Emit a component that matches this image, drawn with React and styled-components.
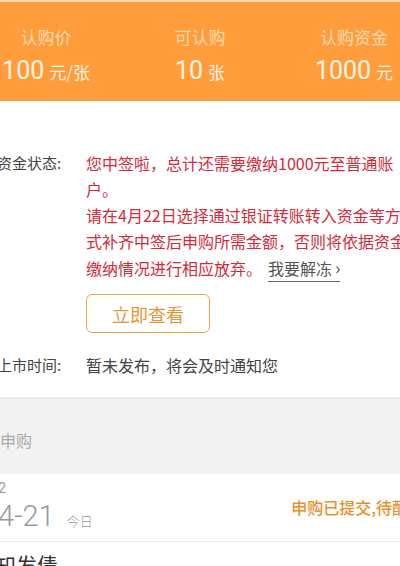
import React from 'react';
import styled, { createGlobalStyle } from 'styled-components';

const GlobalStyle = createGlobalStyle`
  html, body {
    margin: 0;
    padding: 0;
    background: #ffffff;
    overflow: hidden;
  }
  body {
    font-family: "Noto Sans CJK SC", "Noto Sans", sans-serif;
  }
`;

const stats = [
  { label: '认购价', value: '100', unit: '元/张' },
  { label: '可认购', value: '10', unit: '张' },
  { label: '认购资金', value: '1000', unit: '元' },
];

const App = () => {
  return (
    <Page>
      <GlobalStyle />
      <Header>
        {stats.map((s) => (
          <Stat key={s.label}>
            <StatLabel>{s.label}</StatLabel>
            <StatValue>
              {s.value}
              <Unit>{s.unit}</Unit>
            </StatValue>
          </Stat>
        ))}
      </Header>

      <Info>
        <Row>
          <Label>资金状态:</Label>
          <Value>
            <Red>您中签啦，总计还需要缴纳1000元至普通账户。</Red>
            <Red>
              请在4月22日选择通过银证转账转入资金等方式补齐中签后申购所需金额，否则将依据资金缴纳情况进行相应放弃。
              <Unfreeze>
                我要解冻<Chevron>›</Chevron>
              </Unfreeze>
            </Red>
            <Button>立即查看</Button>
          </Value>
        </Row>
        <Row $top={19}>
          <Label>上市时间:</Label>
          <Value>
            <Plain>暂未发布，将会及时通知您</Plain>
          </Value>
        </Row>
      </Info>

      <Band>
        <BandTitle>我的申购</BandTitle>
      </Band>

      <Record>
        <DateBox>
          <Week>T+2</Week>
          <Day>
            04-21<Today>今日</Today>
          </Day>
        </DateBox>
        <Status>申购已提交,待配号</Status>
      </Record>

      <NextRow>通知发债</NextRow>
    </Page>
  );
};

export default App;

const Page = styled.div`
  width: 462px;
  margin-left: -31px;
  min-height: 566px;
  background: #ffffff;
`;

const Header = styled.div`
  height: 99px;
  border-top: 2px solid #fcd6ad;
  background-color: #ff9c3c;
  display: grid;
  grid-template-columns: repeat(3, 1fr);
`;

const Stat = styled.div`
  display: flex;
  flex-direction: column;
  align-items: center;
  padding-top: 24px;
`;

const StatLabel = styled.div`
  font-size: 17px;
  line-height: 22px;
  color: #ffd9ae;
`;

const StatValue = styled.div`
  margin-top: 8px;
  font-family: "Roboto", "Noto Sans CJK SC", sans-serif;
  font-size: 25px;
  line-height: 30px;
  color: #fff4e4;
`;

const Unit = styled.span`
  margin-left: 5px;
  font-family: "Noto Sans CJK SC", sans-serif;
  font-size: 17px;
`;

const Info = styled.div`
  padding: 49px 17px 19px 28px;
  border-bottom: 2px solid #ebebeb;
`;

const Row = styled.div`
  display: flex;
  margin-top: ${(p) => p.$top || 0}px;
`;

const Label = styled.div`
  width: 89px;
  flex-shrink: 0;
  font-size: 15px;
  line-height: 26px;
  color: #444444;
`;

const Value = styled.div`
  flex: 1;
  display: flex;
  flex-direction: column;
  align-items: flex-start;
`;

const Red = styled.div`
  font-size: 16px;
  line-height: 26px;
  color: #d42a3a;
`;

const Unfreeze = styled.span`
  margin-left: 6px;
  color: #555555;
  border-bottom: 1px solid #666666;
  padding-bottom: 1px;
`;

const Chevron = styled.span`
  margin-left: 3px;
  font-size: 18px;
`;

const Button = styled.div`
  margin-top: 13px;
  width: 124px;
  height: 39px;
  box-sizing: border-box;
  border: 1.5px solid #e9a64f;
  border-radius: 6px;
  display: flex;
  align-items: center;
  justify-content: center;
  font-size: 18px;
  color: #e39634;
`;

const Plain = styled.div`
  font-size: 16px;
  line-height: 26px;
  color: #444444;
`;

const Band = styled.div`
  height: 75px;
  background: #f2f2f2;
  display: flex;
  align-items: center;
  padding-top: 6px;
  box-sizing: border-box;
`;

const BandTitle = styled.div`
  margin-left: -1px;
  font-size: 16px;
  color: #aaaaaa;
`;

const Record = styled.div`
  height: 68px;
  box-sizing: border-box;
  border-bottom: 1px solid #ececec;
  display: flex;
  align-items: center;
  justify-content: space-between;
`;

const DateBox = styled.div`
  display: flex;
  flex-direction: column;
  margin-left: 13px;
  padding-top: 2px;
`;

const Week = styled.div`
  font-family: "Roboto", sans-serif;
  font-size: 14px;
  line-height: 16px;
  color: #999999;
`;

const Day = styled.div`
  margin-top: 3px;
  font-family: "Roboto", sans-serif;
  font-size: 29px;
  line-height: 34px;
  font-weight: 300;
  color: #9a9a9a;
`;

const Today = styled.span`
  margin-left: 12px;
  font-family: "Noto Sans CJK SC", sans-serif;
  font-size: 13px;
  color: #999999;
`;

const Status = styled.div`
  margin-right: 7px;
  padding-bottom: 2px;
  font-size: 16px;
  font-weight: 500;
  color: #e8902c;
  white-space: nowrap;
`;

const NextRow = styled.div`
  padding: 8px 0 0 5px;
  font-size: 21px;
  line-height: 28px;
  color: #333333;
`;
